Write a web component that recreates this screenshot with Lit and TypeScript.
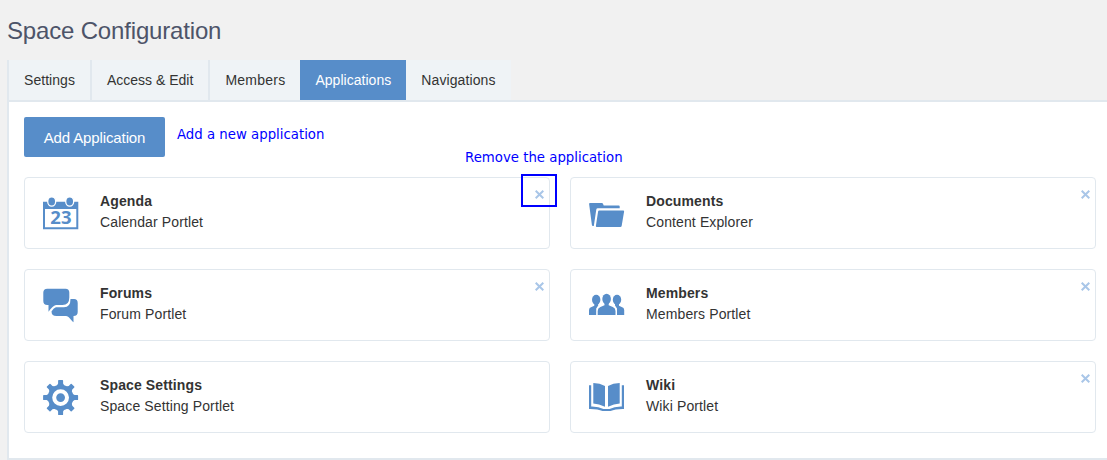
import { LitElement, html, svg, css, nothing } from "lit";
import { customElement, property } from "lit/decorators.js";
import { classMap } from "lit/directives/class-map.js";
import { styleMap } from "lit/directives/style-map.js";

const gearTeeth = [0, 45, 90, 135, 180, 225, 270, 315];

const icons: Record<string, unknown> = {
  agenda: svg`
    <path fill-rule="evenodd" d="M0 6.800H35.300V34.200H0ZM2 14V32.200H33.300V14Z"/>
    <ellipse class="ring" cx="8.700" cy="6.500" rx="4" ry="4.600"/>
    <ellipse class="ring" cx="26.700" cy="6.500" rx="4" ry="4.600"/>
    <text x="17.900" y="29.200" text-anchor="middle">23</text>`,
  forums: svg`
    <path d="M4.3 1.8H22.5Q26.3 1.8 26.3 5.6V10.5Q26.3 18 19.5 18H13C10.5 18.3 8 21.500 5.500 24.700V18H4.300Q.3 18 .3 14V5.600Q.3 1.800 4.300 1.800Z"/>
    <path d="M27.500 12H31Q34.700 12 34.700 16V25Q34.700 29 30.500 29V35.300C28 33.500 26 29 23 29H13.500Q8.500 29 8.500 24.500C9.800 23 11 20.300 14 20.300H21Q27.500 20.300 27.500 12Z"/>`,
  settings: svg`
    <g transform="translate(17.6 18.600)">
      ${gearTeeth.map((a) => svg`<path transform=${`rotate(${a})`} d="M-4.300 -11L-2.500 -14V-16.800Q-2.500 -17.500 -1.800 -17.500H1.800Q2.500 -17.500 2.500 -16.800V-14L4.300 -11Z"/>`)}
      <circle r="12.800"/>
      <circle class="hole" r="6.400"/>
    </g>`,
  documents: svg`
    <path d="M1 8H12.800Q13.800 8 14.200 9.300L14.700 10.600H29.800Q30.700 10.600 30.700 11.500V13.200H8.800Q7.500 13.200 7.300 14.500L4.800 31H4Q3 31 2.900 30L.1 9Q0 8 1 8Z"/>
    <path d="M10.200 15.500H34.200Q35.300 15.500 35.100 16.600L32.700 30.800Q32.500 32 31.300 32H7.800Q6.700 32 6.900 30.800L9.100 16.500Q9.200 15.500 10.200 15.500Z"/>`,
  members: svg`
    <ellipse cx="7.200" cy="12.800" rx="4.200" ry="5"/>
    <path d="M5.300 15H9.200V18.500L7.200 21.500V28H0V23Q0 20.500 2.500 20L5.300 18.800Z"/>
    <ellipse cx="28" cy="12.800" rx="4.200" ry="5"/>
    <path d="M26 15H30V18.800L32.700 20Q35.200 20.500 35.200 23V28H28V21.500L26 18.500Z"/>
    <path class="gap" d="M15 17.500L9.200 19.500Q7.800 21 7.800 28H27.300Q27.300 21 26 19.500L20.500 17.500Z"/>
    <ellipse cx="17.600" cy="12" rx="4.300" ry="5.200"/>
    <path d="M15.500 15H19.700V18.300L23.800 20Q26.500 21 26.500 24V28H8.700V24Q8.700 21 11.400 20L15.500 18.300Z"/>`,
  wiki: svg`
    <path d="M4.300 4Q11 4.200 16 7V27.700Q10 24.800 4.300 24.600Z"/>
    <path d="M30.700 4Q24 4.200 19 7V27.700Q25 24.800 30.700 24.600Z"/>
    <path d="M0 6.300H2.200V27.400Q9.500 27.200 14.500 30H20.500Q25.500 27.200 32.800 27.400V6.300H35V30Q26.500 29.800 21.500 32H13.500Q8.500 29.800 0 30Z"/>`,
};

@customElement("app-card")
class AppCard extends LitElement {
  @property() icon = "";
  @property() name = "";
  @property() portlet = "";
  @property({ type: Boolean }) removable = false;

  static styles = css`
    :host {
      display: flex;
      box-sizing: border-box;
      height: 72px;
      border: 1px solid #e1e8ee;
      border-radius: 4px;
      padding: 0 10px 0 18px;
      position: relative;
      background: #fff;
    }
    .icon {
      width: 36px;
      height: 36px;
      margin: 17px 21px 0 0;
      fill: #578dc9;
      overflow: visible;
      flex: none;
    }
    .icon .ring { stroke: #fff; stroke-width: 1.300; }
    .icon .hole { fill: #578dc9; stroke: #fff; stroke-width: 4; }
    .icon .gap { fill: #fff; }
    .icon text { font: bold 18.500px "Noto Sans", sans-serif; }
    .name, .portlet { line-height: 21px; white-space: nowrap; letter-spacing: 0.120px; }
    .name { font-weight: bold; margin-top: 13px; }
    .remove {
      position: absolute;
      top: 12px;
      right: 5px;
      width: 9px;
      height: 9px;
      stroke: #a9c6e8;
      stroke-width: 2;
    }
  `;

  render() {
    return html`
      <svg class="icon" viewBox="0 0 36 36">${icons[this.icon]}</svg>
      <div>
        <div class="name">${this.name}</div>
        <div class="portlet">${this.portlet}</div>
      </div>
      ${this.removable
        ? html`<svg class="remove" viewBox="0 0 9 9"><path d="M.7 .7L8.300 8.300M8.300 .7L.7 8.300"/></svg>`
        : nothing}
    `;
  }
}

@customElement("app-root")
class AppRoot extends LitElement {
  static styles = css`
    :host {
      display: flex;
      flex-direction: column;
      box-sizing: border-box;
      height: 460px;
      padding-left: 7px;
      position: relative;
      overflow: hidden;
      background: #f1f1f1;
      color: #333;
      font: 14px/20px "Liberation Sans", Arial, sans-serif;
    }
    .title {
      margin: 0;
      height: 60px;
      box-sizing: border-box;
      padding-top: 16px;
      font-size: 24px;
      font-weight: normal;
      line-height: 30px;
      letter-spacing: -0.170px;
      color: #4d5469;
    }
    .tabs { display: flex; height: 40px; border-left: 2px solid #e1e8ee; }
    .tab {
      padding: 0 15px;
      line-height: 40px;
      background: #eff3f6;
      border-right: 2px solid #e1e8ee;
      white-space: nowrap;
    }
    .tab.flush { border-right: none; }
    .tab.active { background: #578dc9; color: #fff; }
    .panel {
      flex: 1;
      box-sizing: border-box;
      border: 2px solid #e1e8ee;
      border-right: none;
      background: #fff;
      padding: 15px 11px 0 15px;
    }
    .toolbar { display: flex; gap: 12px; height: 60px; }
    .add {
      box-sizing: border-box;
      width: 141px;
      height: 40px;
      border: none;
      border-radius: 2px;
      padding: 0;
      background: #578dc9;
      color: #fff;
      font: 15px "Liberation Sans", Arial, sans-serif;
      letter-spacing: -0.120px;
    }
    .note {
      color: #00f;
      font: 13.300px/18px "DejaVu Sans", sans-serif;
      white-space: nowrap;
    }
    .note.add-note { margin-top: 9px; }
    .note.remove-note { position: absolute; left: 465px; top: 149px; }
    .marker {
      position: absolute;
      left: 521px;
      top: 174px;
      width: 32px;
      height: 29px;
      border: 2px solid #00f;
    }
    .cards { display: grid; grid-template-columns: 1fr 1fr; gap: 20px; }
  `;

  private tabs = [
    { label: "Settings", tracking: 0.05 },
    { label: "Access & Edit", tracking: 0 },
    { label: "Members", tracking: 0.24 },
    { label: "Applications", tracking: 0.03 },
    { label: "Navigations", tracking: 0.11 },
  ];
  private apps = [
    { icon: "agenda", name: "Agenda", portlet: "Calendar Portlet", removable: true },
    { icon: "documents", name: "Documents", portlet: "Content Explorer", removable: true },
    { icon: "forums", name: "Forums", portlet: "Forum Portlet", removable: true },
    { icon: "members", name: "Members", portlet: "Members Portlet", removable: true },
    { icon: "settings", name: "Space Settings", portlet: "Space Setting Portlet", removable: false },
    { icon: "wiki", name: "Wiki", portlet: "Wiki Portlet", removable: true },
  ];

  render() {
    return html`
      <h1 class="title">Space Configuration</h1>
      <div class="tabs">
        ${this.tabs.map(
          (t, i) => html`<div
            class=${classMap({ tab: true, active: i === 3, flush: i > 1 })}
            style=${styleMap({ letterSpacing: `${t.tracking}px` })}
          >${t.label}</div>`
        )}
      </div>
      <div class="panel">
        <div class="toolbar">
          <button class="add">Add Application</button>
          <span class="note add-note">Add a new application</span>
        </div>
        <div class="cards">
          ${this.apps.map(
            (a) => html`<app-card .icon=${a.icon} .name=${a.name} .portlet=${a.portlet} .removable=${a.removable}></app-card>`
          )}
        </div>
      </div>
      <span class="note remove-note">Remove the application</span>
      <div class="marker"></div>
    `;
  }
}
